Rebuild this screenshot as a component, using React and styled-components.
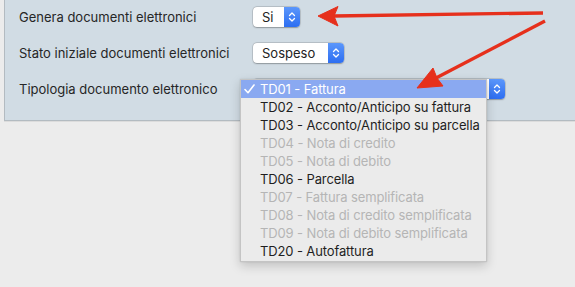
import React from "react";
import styled, { createGlobalStyle } from "styled-components";

const Global = createGlobalStyle`
  html, body { margin: 0; padding: 0; background: #ececec; }
  body { font-family: Inter, "Noto Sans", "Liberation Sans", sans-serif; font-size: 13px; color: #262626; }
  #root { position: relative; width: 575px; height: 287px; overflow: hidden; }
`;

const Page = styled.div`
  position: relative;
  width: 575px;
  height: 287px;
  background: #ececec;
`;

const Panel = styled.div`
  margin-left: 4px;
  width: 600px;
  box-sizing: border-box;
  height: 121px;
  background: #d1dce4;
  border-left: 1px solid #b3bbc1;
  border-bottom: 1px solid #b3bbc1;
  box-shadow: 0 1px 0 #dcdcdc;
  padding: 6px 0 0 14px;
  display: grid;
  grid-template-columns: 234px auto;
  grid-auto-rows: 21px;
  row-gap: 15px;
  align-items: center;
`;

const Label = styled.div`
  font-size: 13px;
  line-height: 21px;
  color: #262626;
  white-space: nowrap;
  padding-top: 1px;
`;

const SelectBox = styled.div`
  position: relative;
  width: ${(p) => p.$w}px;
  height: 20px;
  display: flex;
  align-items: stretch;
  background: #fff;
  border-radius: 4px;
  box-shadow: 0 0 0 0.5px rgba(0, 0, 0, 0.18), 0 0.5px 1.5px rgba(0, 0, 0, 0.25);
`;

const SelectText = styled.div`
  flex: 1;
  padding-left: 9px;
  line-height: 20px;
  font-size: 13px;
  color: #222;
`;

const Stepper = styled.div`
  width: 16px;
  border-radius: 0 4px 4px 0;
  background: linear-gradient(#5b97fb, #2d6ef1);
  display: flex;
  align-items: center;
  justify-content: center;
`;

const Menu = styled.div`
  position: absolute;
  left: -13px;
  top: 0;
  width: 247px;
  padding: 0 0 1px;
  background: #ebebeb;
  border: 0.5px solid #c4c4c4;
  box-sizing: border-box;
  box-shadow: 0 4px 10px rgba(0, 0, 0, 0.18), 0 0 2px rgba(0, 0, 0, 0.1);
  z-index: 2;
`;

const Item = styled.div`
  position: relative;
  height: 18px;
  line-height: 18px;
  padding-left: 19px;
  font-size: 13px;
  letter-spacing: -0.12px;
  white-space: nowrap;
  color: ${(p) => (p.$selected ? "#fff" : p.$disabled ? "#b5b5b5" : "#1f1f1f")};
  background: ${(p) => (p.$selected ? "#8aa9f1" : "transparent")};
`;

const Check = styled.svg`
  position: absolute;
  left: 3px;
  top: 4px;
`;

const Overlay = styled.svg`
  position: absolute;
  left: 0;
  top: 0;
  pointer-events: none;
  z-index: 5;
`;

const Chevrons = () => (
  <svg width="8" height="12" viewBox="0 0 8 12">
    <path d="M1.5 4.5 L4 2 L6.5 4.5 M1.5 7.5 L4 10 L6.5 7.5" stroke="#fff" strokeWidth="1.3" fill="none" strokeLinecap="round" strokeLinejoin="round" />
  </svg>
);

const Select = ({ w, value, children }) => (
  <SelectBox $w={w}>
    <SelectText>{value}</SelectText>
    <Stepper>
      <Chevrons />
    </Stepper>
    {children}
  </SelectBox>
);

const items = [
  ["TD01 - Fattura", false, true],
  ["TD02 - Acconto/Anticipo su fattura", false],
  ["TD03 - Acconto/Anticipo su parcella", false],
  ["TD04 - Nota di credito", true],
  ["TD05 - Nota di debito", true],
  ["TD06 - Parcella", false],
  ["TD07 - Fattura semplificata", true],
  ["TD08 - Nota di credito semplificata", true],
  ["TD09 - Nota di debito semplificata", true],
  ["TD20 - Autofattura", false],
];

export default function App() {
  return (
    <Page>
      <Global />
      <Panel>
        <Label>Genera documenti elettronici</Label>
        <div><Select w={47} value="Si" /></div>
        <Label>Stato iniziale documenti elettronici</Label>
        <div><Select w={91} value="Sospeso" /></div>
        <Label>Tipologia documento elettronico</Label>
        <div>
          <Select w={252} value="">
            <Menu>
              {items.map(([t, dis, sel]) => (
                <Item key={t} $disabled={dis} $selected={sel}>
                  {sel && (
                    <Check width="11" height="10" viewBox="0 0 11 10">
                      <path d="M1 5.5 L4 8.7 L10 1" stroke="#fff" strokeWidth="1.6" fill="none" strokeLinecap="round" strokeLinejoin="round" />
                    </Check>
                  )}
                  {t}
                </Item>
              ))}
            </Menu>
          </Select>
        </div>
      </Panel>
      <Overlay width="575" height="287" viewBox="0 0 575 287">
        <g fill="#e6301c" stroke="#e6301c">
          <line x1="543" y1="13" x2="334" y2="16" strokeWidth="3.3" />
          <polygon points="318,16 338,6.5 334,16 338,26" strokeWidth="1" strokeLinejoin="round" />
          <line x1="545" y1="21" x2="436" y2="78" strokeWidth="3.3" />
          <polygon points="417,88 433,68 437,78 443,86" strokeWidth="1" strokeLinejoin="round" />
        </g>
      </Overlay>
    </Page>
  );
}
